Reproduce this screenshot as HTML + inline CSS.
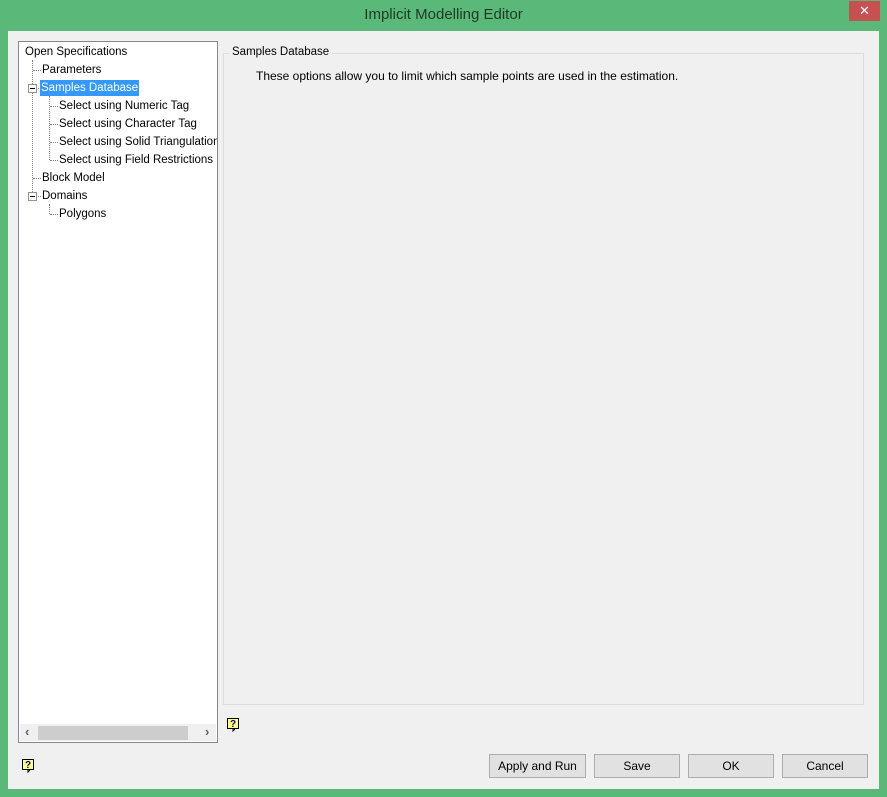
<!DOCTYPE html>
<html><head><meta charset="utf-8"><style>
*{margin:0;padding:0;box-sizing:border-box}
body{width:887px;height:797px;background:#5ab978;font-family:"Liberation Sans",sans-serif;font-size:12px;color:#000;position:relative;overflow:hidden}
.abs{position:absolute}
.title{left:0;top:6px;width:887px;text-align:center;font-size:15px;color:#1e3a26}
.close{left:849px;top:1px;width:31px;height:20px;background:#c75050;color:#fff;text-align:center;font-size:13px;line-height:20px}
.client{left:8px;top:31px;width:871px;height:758px;background:#f0f0f0}
.tree{left:18px;top:41px;width:200px;height:702px;background:#fff;border:1px solid #828790;overflow:hidden}
.it{position:absolute;white-space:nowrap;line-height:16px;font-size:11.5px}
.sel{background:#3399ff;color:#fff;padding:0 1px}
.dv{position:absolute;border-left:1px dotted #808080;width:0}
.dh{position:absolute;border-top:1px dotted #808080;height:0}
.pm{position:absolute;width:9px;height:9px;border:1px solid #919191;background:#fff}
.pm::after{content:"";position:absolute;left:1px;top:3px;width:5px;height:1px;background:#000}
.sb{left:1px;top:682px;width:196px;height:17px;background:#f0f0f0}
.thumb{left:18px;top:2px;width:150px;height:14px;background:#cdcdcd}
.group{left:223px;top:53px;width:641px;height:652px;border:1px solid #dcdcdc}
.gl{left:229px;top:46px;background:#f0f0f0;padding:0 3px;font-size:11.5px}
.btn{position:absolute;top:754px;height:24px;border:1px solid #adadad;background:#e1e1e1;text-align:center;line-height:22px}
.help{position:absolute;width:14px;height:15px}
</style></head><body>
<div class="abs title">Implicit Modelling Editor</div>
<div class="abs close">✕</div>
<div class="abs client"></div>
<div class="abs tree">
  <div class="it" style="left:6px;top:2px">Open Specifications</div>
  <div class="dv" style="left:13px;top:18px;height:136px"></div>
  <div class="dh" style="left:14px;top:28px;width:8px"></div>
  <div class="it" style="left:23px;top:20px">Parameters</div>
  <div class="pm" style="left:9px;top:42px"></div>
  <div class="dh" style="left:19px;top:46px;width:3px"></div>
  <div class="it sel" style="left:21px;top:38px">Samples Database</div>
  <div class="dv" style="left:30px;top:54px;height:64px"></div>
  <div class="dh" style="left:31px;top:64px;width:8px"></div>
  <div class="dh" style="left:31px;top:82px;width:8px"></div>
  <div class="dh" style="left:31px;top:100px;width:8px"></div>
  <div class="dh" style="left:31px;top:118px;width:8px"></div>
  <div class="it" style="left:40px;top:56px">Select using Numeric Tag</div>
  <div class="it" style="left:40px;top:74px">Select using Character Tag</div>
  <div class="it" style="left:40px;top:92px">Select using Solid Triangulation</div>
  <div class="it" style="left:40px;top:110px">Select using Field Restrictions</div>
  <div class="dh" style="left:14px;top:136px;width:8px"></div>
  <div class="it" style="left:23px;top:128px">Block Model</div>
  <div class="pm" style="left:9px;top:150px"></div>
  <div class="dh" style="left:19px;top:154px;width:3px"></div>
  <div class="it" style="left:23px;top:146px">Domains</div>
  <div class="dv" style="left:30px;top:162px;height:10px"></div>
  <div class="dh" style="left:31px;top:172px;width:8px"></div>
  <div class="it" style="left:40px;top:164px">Polygons</div>
  <div class="abs sb"><div class="abs thumb"></div>
    <div class="abs" style="left:5px;top:0;color:#606060;font-size:13px;font-weight:bold">‹</div>
    <div class="abs" style="left:185px;top:0;color:#606060;font-size:13px;font-weight:bold">›</div>
  </div>
</div>
<div class="abs group"></div>
<div class="abs gl">Samples Database</div>
<div class="abs" style="left:256px;top:69px">These options allow you to limit which sample points are used in the estimation.</div>
<svg class="help" style="left:226px;top:717px" viewBox="0 0 14 15"><rect x="1.5" y="1.5" width="11" height="10" fill="#ffff80" stroke="#000"/><path d="M7 12v2l2-2" fill="#fff" stroke="#000"/><text x="7" y="10" text-anchor="middle" font-size="10" font-weight="bold" fill="#00008b" font-family="Liberation Sans">?</text></svg>
<svg class="help" style="left:21px;top:758px" viewBox="0 0 14 15"><rect x="1.5" y="1.5" width="11" height="10" fill="#ffff80" stroke="#000"/><path d="M7 12v2l2-2" fill="#fff" stroke="#000"/><text x="7" y="10" text-anchor="middle" font-size="10" font-weight="bold" fill="#00008b" font-family="Liberation Sans">?</text></svg>
<div class="btn" style="left:489px;width:97px">Apply and Run</div>
<div class="btn" style="left:594px;width:86px">Save</div>
<div class="btn" style="left:688px;width:86px">OK</div>
<div class="btn" style="left:782px;width:86px">Cancel</div>
</body></html>
